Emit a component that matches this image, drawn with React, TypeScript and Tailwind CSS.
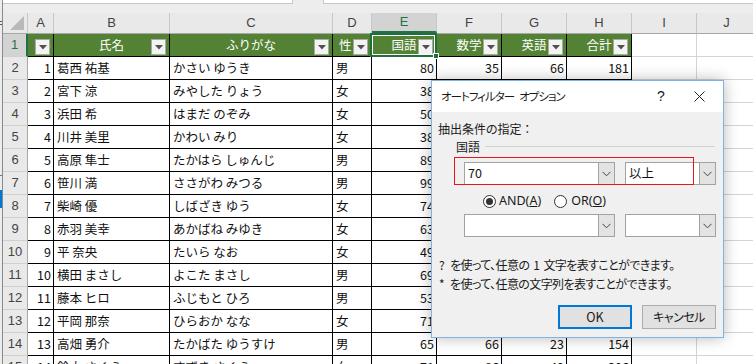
import React from "react";

const JP = "font-['Noto_Sans_CJK_JP','Noto_Sans_CJK_SC',sans-serif]";

type Row = [string, string, string, string, string, string, string, string];

const rows: Row[] = [
  ["1", "葛西 祐基", "かさい ゆうき", "男", "80", "35", "66", "181"],
  ["2", "宮下 涼", "みやした りょう", "女", "38", "72", "45", "155"],
  ["3", "浜田 希", "はまだ のぞみ", "女", "50", "64", "88", "202"],
  ["4", "川井 美里", "かわい みり", "女", "38", "56", "71", "165"],
  ["5", "高原 隼士", "たかはら しゅんじ", "男", "89", "92", "54", "235"],
  ["6", "笹川 満", "ささがわ みつる", "男", "99", "81", "77", "257"],
  ["7", "柴崎 優", "しばざき ゆう", "女", "74", "48", "90", "212"],
  ["8", "赤羽 美幸", "あかばね みゆき", "女", "63", "70", "58", "191"],
  ["9", "平 奈央", "たいら なお", "女", "49", "33", "62", "144"],
  ["10", "横田 まさし", "よこた まさし", "男", "69", "85", "41", "195"],
  ["11", "藤本 ヒロ", "ふじもと ひろ", "男", "53", "60", "79", "192"],
  ["12", "平岡 那奈", "ひらおか なな", "女", "71", "44", "65", "180"],
  ["13", "高畑 勇介", "たかばた ゆうすけ", "男", "65", "66", "23", "154"],
  ["14", "鈴木 さくら", "すずき さくら", "女", "71", "86", "49", "206"],
];

// widths of A..H (black table) and I, J (plain grid)
const tableW = [
  "w-[26px]",
  "w-[116px]",
  "w-[163px]",
  "w-[39px]",
  "w-[65px]",
  "w-[65px]",
  "w-[65px]",
  "w-[65px]",
];
const letters = ["A", "B", "C", "D", "E", "F", "G", "H", "I", "J"];
const headW = [...tableW, "w-[65px]", "w-[60px]"];
const heads = ["", "氏名", "ふりがな", "性", "国語", "数学", "英語", "合計"];

function FilterButton() {
  return (
    <div className="absolute right-[3px] top-[5px] w-[15px] h-[16px] bg-[#f3f3f3] border border-[#a9a9a9] flex items-center justify-center z-10">
      <svg width="8" height="5" viewBox="0 0 8 5">
        <path d="M0 0 L8 0 L4 4.5 Z" fill="#505050" />
      </svg>
    </div>
  );
}

function Chevron() {
  return (
    <svg width="9" height="6" viewBox="0 0 9 6">
      <path d="M0.5 0.8 L4.5 4.8 L8.5 0.8" fill="none" stroke="#404040" strokeWidth="1" />
    </svg>
  );
}

function Combo({ w, value }: { w: string; value?: string }) {
  return (
    <div className={`${w} h-[23px] bg-white border border-[#a2a2a2] flex`}>
      <div className="flex-1 flex items-center pl-[3px] text-[12.5px] text-[#111]">{value}</div>
      <div className="w-[16px] bg-[#e3e3e3] border-l border-[#a2a2a2] flex items-center justify-center">
        <Chevron />
      </div>
    </div>
  );
}

function Radio({ checked }: { checked?: boolean }) {
  return (
    <div className="w-[13px] h-[13px] rounded-full border border-[#333] bg-white flex items-center justify-center">
      {checked && <div className="w-[7px] h-[7px] rounded-full bg-[#333]" />}
    </div>
  );
}

function Dialog() {
  return (
    <div
      className={`absolute left-[431px] top-[80px] w-[293px] h-[258px] border border-[#7fb2e5] bg-[#f0f0f0] shadow-[0_0_14px_rgba(0,0,0,0.28)] flex flex-col z-30 ${JP} [font-feature-settings:'palt'] text-[12px] text-[#1a1a1a]`}
    >
      {/* title bar */}
      <div className="h-[31px] bg-white flex items-center pl-[9px] shrink-0">
        <span className="flex-1 text-[11.5px] tracking-[-1px]">
          オートフィルター<span className="inline-block w-[5px]" />オプション
        </span>
        <span className="w-[20px] text-center text-[14px] font-['Liberation_Sans',sans-serif] mr-[22px]">?</span>
        <div className="w-[12px] h-[12px] mr-[18px] flex items-center justify-center">
          <svg width="11" height="11" viewBox="0 0 11 11">
            <path d="M0.5 0.5 L10.5 10.5 M10.5 0.5 L0.5 10.5" stroke="#222" strokeWidth="1" />
          </svg>
        </div>
      </div>

      <div className="relative flex-1 flex flex-col">
        {/* red highlight frame */}
        <div className="absolute left-[22px] top-[45px] w-[240px] h-[28px] border border-[#e8141c] z-10" />

        <div className="h-[16px] leading-[16px] mt-[9px] pl-[6px]">抽出条件の指定 ：</div>
        <div className="h-[16px] leading-[16px] mt-[2px] pl-[24px] pr-[8px] flex items-center">
          <span>国語</span>
          <div className="flex-1 h-px bg-[#d2d2d2] ml-[5px] mt-[-2px]" />
        </div>

        <div className="flex mt-[7px] pl-[32px] gap-[10px]">
          <Combo w="w-[151px]" value="70" />
          <Combo w="w-[91px]" value="以上" />
        </div>

        <div className="flex items-center h-[16px] mt-[8px] pl-[51px]">
          <Radio checked />
          <span className="ml-[3px] font-['Noto_Sans',sans-serif] text-[12.5px]">
            AND(<span className="underline">A</span>)
          </span>
          <div className="ml-[13px]">
            <Radio />
          </div>
          <span className="ml-[4px] font-['Noto_Sans',sans-serif] text-[12.5px]">
            OR(<span className="underline">O</span>)
          </span>
        </div>

        <div className="flex mt-[5px] pl-[32px] gap-[10px]">
          <Combo w="w-[151px]" />
          <Combo w="w-[91px]" />
        </div>

        <div className="h-[16px] leading-[16px] mt-[20px] pl-[7px] tracking-[-0.6px]">
          ?<span className="inline-block w-[6px]" />を使って、任意の<span className="inline-block w-[4px]" />1<span className="inline-block w-[4px]" />文字を表すことができます。
        </div>
        <div className="h-[16px] leading-[16px] mt-[3px] pl-[7px] tracking-[-0.6px]">
          *<span className="inline-block w-[6px]" />を使って、任意の文字列を表すことができます。
        </div>

        <div className="flex justify-end gap-[10px] mt-[13px] pr-[7px]">
          <div className="w-[74px] h-[24px] bg-[#e1e1e1] border-2 border-[#0078d7] flex items-center justify-center text-[12.5px]">
            OK
          </div>
          <div className="w-[74px] h-[24px] bg-[#e1e1e1] border border-[#adadad] flex items-center justify-center text-[12px] tracking-[-0.5px]">
            キャンセル
          </div>
        </div>
      </div>
    </div>
  );
}

function RowHeader({ n, selected }: { n: number; selected?: boolean }) {
  return (
    <div
      className={`w-[25px] h-[23px] shrink-0 border-b border-[#d0d0d0] flex items-center justify-center text-[13px] font-['Liberation_Sans',sans-serif] ${
        selected
          ? "bg-[#d3d3d3] text-[#217346] border-r-2 border-r-[#217346]"
          : "bg-[#e9e9e9] text-[#444] border-r border-r-[#a8a8a8]"
      }`}
    >
      {n}
    </div>
  );
}

export default function App() {
  return (
    <div className={`relative w-[753px] h-[364px] overflow-hidden bg-white flex ${JP}`}>
      {/* sliver of the window behind */}
      <div className="w-[3px] h-full shrink-0 bg-[#ececec] border-r border-[#8a8a8a] flex flex-col">
        <div className="h-[21px]" />
        <div className="h-px bg-[#555]" />
        <div className="h-[2px]" />
        <div className="h-px bg-[#555]" />
        <div className="h-[150px]" />
        <div className="h-px bg-[#777]" />
        <div className="h-[14px]" />
        <div className="h-[18px] bg-[#0078d7]" />
      </div>

      <div className="flex-1 flex flex-col">
        {/* formula bar remnant */}
        <div className="h-[13px] bg-[#ededed] shrink-0">
          <div className="flex h-[4px]">
            <div className="w-[290px] bg-white border-b border-r border-[#c6c6c6]" />
            <div className="w-[30px]" />
            <div className="flex-1 bg-white border-b border-l border-[#c6c6c6]" />
          </div>
        </div>

        {/* column headers */}
        <div className="flex h-[21px] shrink-0 border-b border-[#a8a8a8] bg-[#e9e9e9]">
          <div className="w-[25px] shrink-0 border-r border-[#c8c8c8] flex items-end justify-end pr-[3px] pb-[3px]">
            <svg width="14" height="14" viewBox="0 0 14 14">
              <path d="M14 0 L14 14 L0 14 Z" fill="#b9b9b9" />
            </svg>
          </div>
          {letters.map((l, i) => (
            <div
              key={l}
              className={`${headW[i]} shrink-0 border-r border-[#c8c8c8] flex items-center justify-center text-[13px] font-['Liberation_Sans',sans-serif] ${
                i === 4 ? "bg-[#d3d3d3] text-[#217346] border-b-2 border-b-[#217346]" : "text-[#444]"
              }`}
            >
              {l}
            </div>
          ))}
        </div>

        {/* row 1: table header */}
        <div className="flex shrink-0">
          <RowHeader n={1} selected />
          {heads.map((h, i) => (
            <div
              key={i}
              className={`${tableW[i]} relative h-[23px] shrink-0 bg-[#548235] border-r border-b border-black flex items-center text-white text-[12.5px] ${
                i === 0 ? "pl-[6px]" : i === 3 ? "pl-[6px]" : "justify-center"
              }`}
            >
              {i === 0 ? "No" : h}
              <FilterButton />
              {i === 4 && (
                <div className="absolute -left-[2px] -top-[1px] -right-[1px] -bottom-[1px] border-2 border-[#1f6e3e] z-20">
                  <div className="absolute inset-0 border border-white" />
                  <div className="absolute -right-[4px] -bottom-[4px] w-[6px] h-[6px] bg-[#1f6e3e] border border-white" />
                </div>
              )}
            </div>
          ))}
          <div className="w-[65px] h-[23px] shrink-0 border-r border-b border-[#d4d4d4]" />
          <div className="w-[60px] h-[23px] shrink-0 border-r border-b border-[#d4d4d4]" />
        </div>

        {/* data rows */}
        {rows.map((r, ri) => (
          <div key={ri} className="flex shrink-0">
            <RowHeader n={ri + 2} />
            {r.map((v, ci) => {
              const num = ci === 0 || ci >= 4;
              return (
                <div
                  key={ci}
                  className={`${tableW[ci]} h-[23px] shrink-0 border-r border-b border-black flex items-center whitespace-nowrap overflow-hidden text-[12.5px] text-[#111] ${
                    num ? "justify-end pr-[2px]" : "pl-[3px]"
                  }`}
                >
                  {v}
                </div>
              );
            })}
            <div className="w-[65px] h-[23px] shrink-0 border-r border-b border-[#d4d4d4]" />
            <div className="w-[60px] h-[23px] shrink-0 border-r border-b border-[#d4d4d4]" />
          </div>
        ))}
      </div>

      <Dialog />
    </div>
  );
}
